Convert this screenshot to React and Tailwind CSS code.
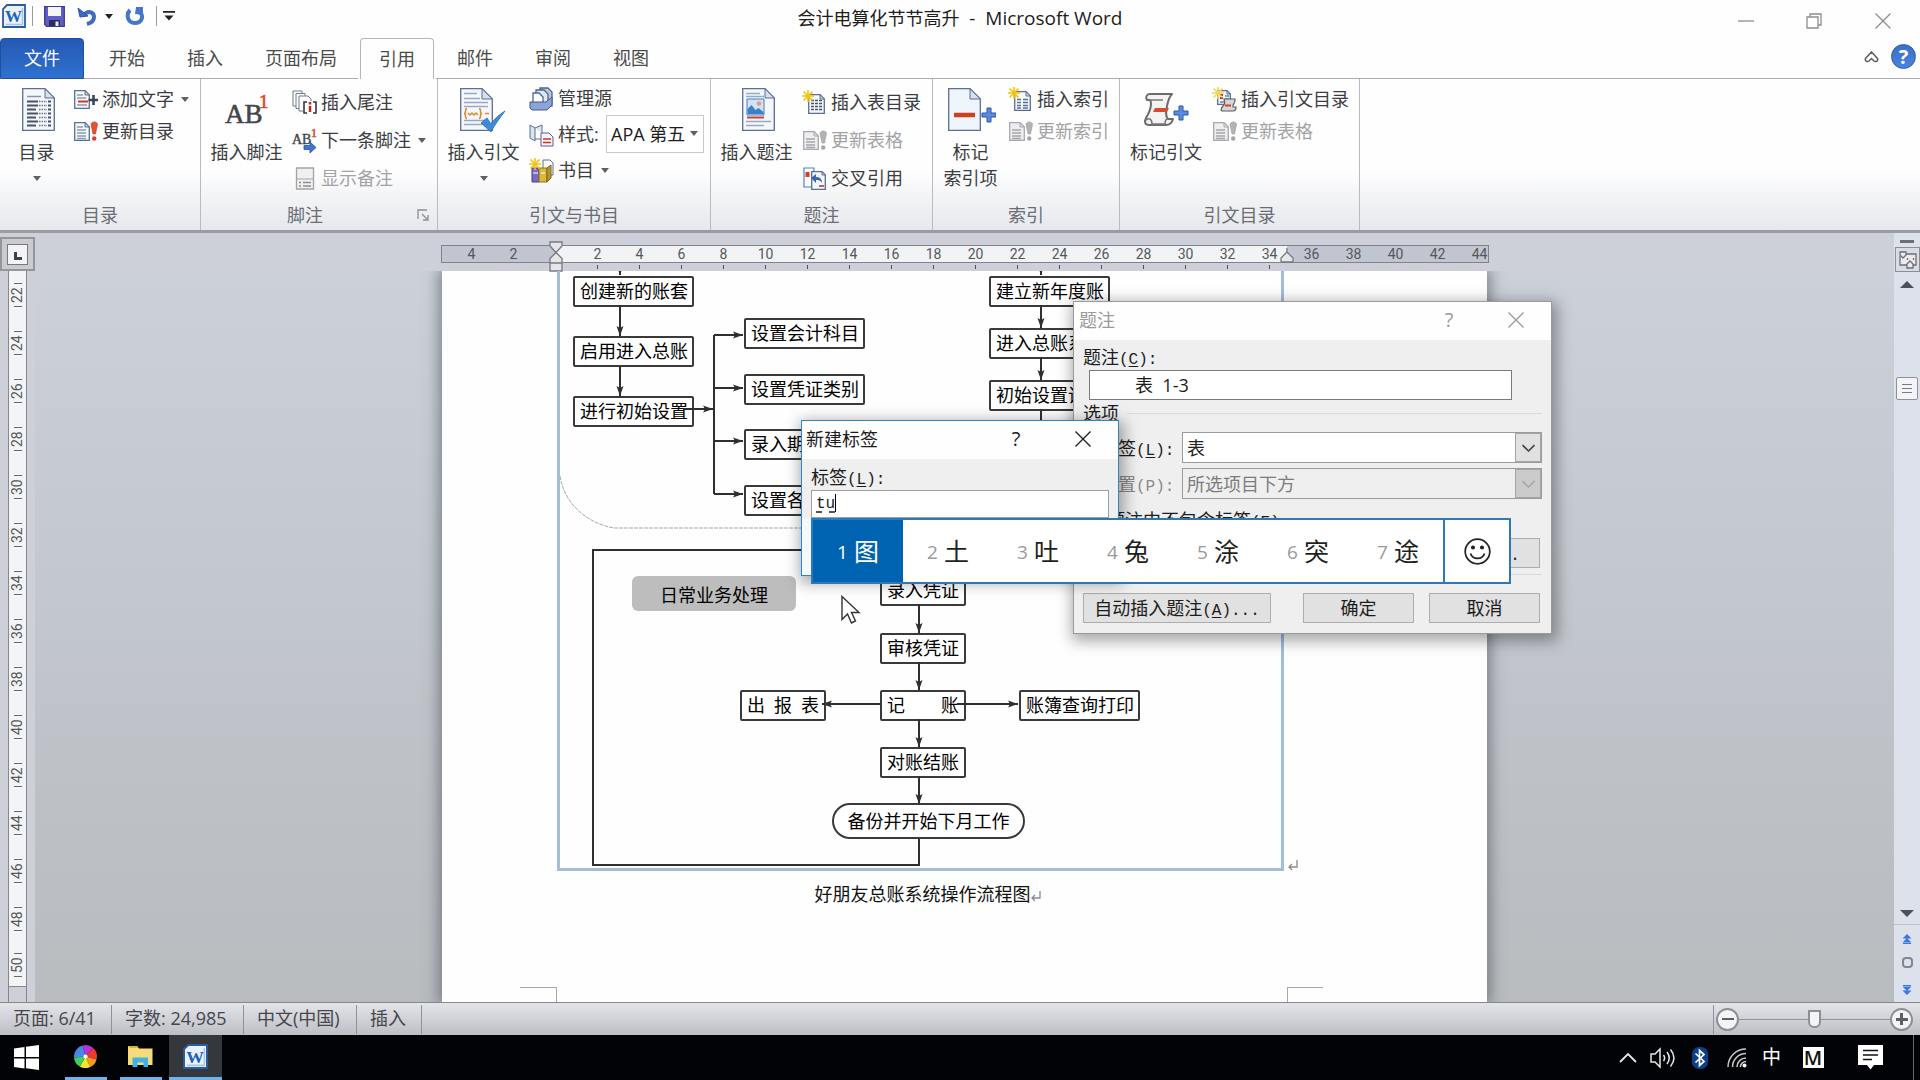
import { useState } from "react"

const ACTIVE_TAB = "引用"
const tabs = ["开始", "插入", "页面布局", "引用", "邮件", "审阅", "视图"]

const rulerMarks = [4, 2, null, 2, 4, 6, 8, 10, 12, 14, 16, 18, 20, 22, 24, 26, 28, 30, 32, 34, 36, 38, 40, 42, 44]
const sideMarks = [22, 24, 26, 28, 30, 32, 34, 36, 38, 40, 42, 44, 46, 48, 50]

const candidates = ["图", "土", "吐", "兔", "涂", "突", "途"]

// flow chart nodes, placed on the drawing canvas
const nodes = [
  { x: 13, y: 5, w: 121, parts: ["创建新的账套"] },
  { x: 13, y: 65, w: 121, parts: ["启用进入总账"] },
  { x: 13, y: 125, w: 121, parts: ["进行初始设置"] },
  { x: 184, y: 47, w: 121, parts: ["设置会计科目"] },
  { x: 184, y: 103, w: 121, parts: ["设置凭证类别"] },
  { x: 184, y: 158, w: 121, parts: ["录入期初余额"] },
  { x: 184, y: 214, w: 121, parts: ["设置各种参数"] },
  { x: 429, y: 5, w: 121, parts: ["建立新年度账"] },
  { x: 429, y: 57, w: 121, parts: ["进入总账系统"] },
  { x: 429, y: 109, w: 121, parts: ["初始设置调整"] },
  { x: 320, y: 304, w: 86, parts: ["录入凭证"] },
  { x: 320, y: 362, w: 86, parts: ["审核凭证"] },
  { x: 180, y: 419, w: 86, parts: ["出", "报", "表"] },
  { x: 320, y: 419, w: 86, parts: ["记", "账"] },
  { x: 459, y: 419, w: 121, parts: ["账簿查询打印"] },
  { x: 320, y: 476, w: 86, parts: ["对账结账"] },
]

const connectors = [
  "M60 0V4", "M60 34V65", "M60 95V125", "M123 138H153",
  "M154 64H183", "M154 117H183", "M154 170H183", "M154 223H183",
  "M481 0V4", "M481 34V57", "M481 86V109", "M481 139V161",
  "M359 333V362", "M359 391V419", "M359 448V476", "M359 505V533",
  "M320 433H262", "M397 433H458",
]

/* ---------- icons ---------- */

function Caret({ className = "text-[#5f6064]" }) {
  return (
    <svg className={className} width="8" height="5" viewBox="0 0 8 5" aria-hidden="true">
      <path d="M0 0h8L4 5z" fill="currentColor" />
    </svg>
  )
}

function Page({ x = 0, y = 0, w = 17, h = 20, fold = 6, fill = "#f4f8fd", stroke = "#5b6f92", children }) {
  return (
    <g transform={`translate(${x} ${y})`}>
      <path d={`M.7 .7H${w - fold}L${w - 0.7} ${fold}V${h - 0.7}H.7z`} fill={fill} stroke={stroke} strokeWidth="1.3" />
      <path d={`M${w - fold} .7V${fold}H${w - 0.7}z`} fill="#d4dfef" stroke={stroke} strokeWidth="1" />
      {children}
    </g>
  )
}

function Star({ color = "#f2c40f" }) {
  return <path d="M6 0v12M0 6h12M1.5 1.5l9 9M10.5 1.5l-9 9" stroke={color} strokeWidth="1.6" />
}

function Small({ children }) {
  return (
    <svg className="shrink-0" width="25" height="25" viewBox="0 0 25 25" fill="none" aria-hidden="true">
      {children}
    </svg>
  )
}

function Big({ children }) {
  return (
    <svg className="shrink-0" width="50" height="45" viewBox="0 0 50 45" fill="none" aria-hidden="true">
      {children}
    </svg>
  )
}

const PlusMark = ({ x, y }) => (
  <path
    transform={`translate(${x} ${y})`}
    d="M5 0h4v5h5v4H9v5H5V9H0V5h5z"
    fill="#5a8be0"
    stroke="#2c55a8"
    strokeWidth="1"
  />
)

const icons = {
  toc: (
    <Big>
      <Page x={10} y={1} w={33} h={43} fold={10}>
        <path d="M5 13.5h11M5 17.5h11M5 21.5h9M5 25.5h11M5 29.5h9M5 33.5h11M5 37.5h9" stroke="#4a5568" strokeWidth="1.8" />
        <path d="M17 13.5h8M17 17.5h8M17 21.5h8M17 25.5h8M17 29.5h8M17 33.5h8M17 37.5h8" stroke="#6b7890" strokeWidth="1.5" strokeDasharray="1.5 1" />
        <path d="M26 13.5h3M26 17.5h3M26 21.5h3M26 25.5h3M26 29.5h3M26 33.5h3M26 37.5h3" stroke="#4a5568" strokeWidth="2" />
        <path d="M5 8.5h14" stroke="#8a94a8" strokeWidth="1.5" />
      </Page>
    </Big>
  ),
  addText: (
    <Small>
      <Page x={1} y={3} w={16} h={19} fold={5}>
        <path d="M3 5h6M3 8h9M3 15h10" stroke="#8b9bb5" strokeWidth="1.3" />
        <path d="M4 11.5h10" stroke="#d03a2a" strokeWidth="2" />
      </Page>
      <path d="M20.5 8v10M15.500 13h9.500" stroke="#3b4557" strokeWidth="2.6" />
    </Small>
  ),
  update: (
    <Small>
      <Page x={1} y={3} w={16} h={19} fold={5}>
        <path d="M3 5h6M3 8h9M3 11h9M3 14h9M3 16.5h9" stroke="#8b9bb5" strokeWidth="1.3" />
      </Page>
      <path d="M18 5.5C18 2 24.5 2 24.5 5.5L22.500 15h-2.500z" fill="#e8512b" stroke="#b8391c" strokeWidth=".6" />
      <circle cx="21.2" cy="19.5" r="2.2" fill="#d9431f" />
    </Small>
  ),
  updateOff: (
    <Small>
      <Page x={1} y={3} w={16} h={19} fold={5} fill="#eeeef0" stroke="#a9a9ad">
        <path d="M3 8h9M3 11h9M3 14h9M3 16.5h9" stroke="#a5a5aa" strokeWidth="1.3" />
      </Page>
      <path d="M18 5.5C18 2 24.5 2 24.5 5.5L22.500 15h-2.500z" fill="#b5b2b5" stroke="#9b989b" strokeWidth=".6" />
      <circle cx="21.2" cy="19.5" r="2.2" fill="#a8a5a8" />
    </Small>
  ),
  footnote: (
    <Big>
      <text x="3" y="36" fontFamily="Liberation Serif, serif" fontSize="27" fill="#44464b" stroke="#44464b" strokeWidth=".6">AB</text>
      <text x="37" y="21" fontFamily="Liberation Serif, serif" fontSize="19" fill="#d9452b" stroke="#d9452b" strokeWidth=".6">1</text>
    </Big>
  ),
  endnote: (
    <Small>
      <path d="M1 1h9v15H1z" fill="#fff" stroke="#6c7a92" />
      <path d="M4 3.5h9v15H4z" fill="#fff" stroke="#6c7a92" />
      <path d="M7 6h9l3 3v12H7z" fill="#fff" stroke="#6c7a92" />
      <path d="M11 11h14v14H11z" fill="#fff" />
      <path d="M15 12h-3v11h3M21 12h3v11h-3" stroke="#33363c" strokeWidth="1.6" />
      <path d="M18 12v2.500M18 16v6" stroke="#c0281e" strokeWidth="2.5" />
    </Small>
  ),
  nextNote: (
    <Small>
      <text x="0" y="16" fontFamily="Liberation Serif, serif" fontSize="14" fill="#44464b" stroke="#44464b" strokeWidth=".4">AB</text>
      <text x="19" y="9" fontFamily="Liberation Serif, serif" fontSize="12" fill="#d9452b" stroke="#d9452b" strokeWidth=".5">1</text>
      <path d="M12 17.5h6v-3.500l6 5.500-6 5.500v-3.500h-6z" fill="#3f74cf" stroke="#2453a5" strokeWidth=".8" />
    </Small>
  ),
  showNotes: (
    <Small>
      <path d="M4.5 2h17v21h-17z" fill="#f1eff0" stroke="#a6a2a6" strokeWidth="1.3" />
      <path d="M4.5 13h17" stroke="#a6a2a6" />
      <path d="M7 16.5h2M11 16.5h8M7 20h2M11 20h8" stroke="#8f8b8f" strokeWidth="1.5" />
    </Small>
  ),
  citation: (
    <Big>
      <Page x={1} y={1} w={33} h={43} fold={11}>
        <path d="M4 5.5h13M4 10.5h16M4 14.5h24M4 18.5h24M4 32.5h24M4 36.5h18" stroke="#98a8c6" strokeWidth="1.6" />
        <path d="M7 20.5c-3 0 0 5-3 5 3 0 0 5 3 5M19 20.5c3 0 0 5 3 5-3 0 0 5-3 5M8 25l2 2 2-2 2 2 2-2 2 2M25 25.500h4" stroke="#d98a35" strokeWidth="1.5" />
      </Page>
      <path d="M22 36l6-5 4 6C36 31 41 27 46 24c-5 7-10 13-14 21z" fill="#3f8ad8" stroke="#2769b5" strokeWidth=".8" />
    </Big>
  ),
  sources: (
    <Small>
      <path d="M11 2h8l4 4v14H11z" fill="#b9c9e2" stroke="#4f6490" strokeWidth="1.3" />
      <path d="M7 4h8l4 4v12H7z" fill="#dde6f3" stroke="#4f6490" strokeWidth="1.3" />
      <path d="M4 7h6l4 4v9H4z" fill="#fff" stroke="#4f6490" strokeWidth="1.3" />
      <path d="M1 16h16l6-5v8l-5 5H3l-2-2z" fill="#8aa5d6" stroke="#3f5a94" />
    </Small>
  ),
  style: (
    <Small>
      <path d="M1 3l5 3v13l-5-3zM6 6l7-3v8" fill="#dbe4f2" stroke="#5b6f92" />
      <path d="M6 17h6" stroke="#5b6f92" />
      <path d="M12 11h8l4 4v9H12z" fill="#f6f3f6" stroke="#5b5f92" />
      <path d="M14 17h8M14 20.5h8" stroke="#c23a2c" strokeWidth="1.5" />
    </Small>
  ),
  biblio: (
    <Small>
      <path d="M14 2h7l3 3v12H14z" fill="#fff" stroke="#5b6f92" />
      <path d="M3 10h7v14H3z" fill="#7a6bc4" stroke="#4a3d8f" />
      <path d="M10 10h8v14h-8z" fill="#d9b93d" stroke="#8f761a" />
      <path d="M18 10l4-3v13l-4 4z" fill="#b8972a" stroke="#7a6412" />
      <path d="M4 15h5M12 15h4" stroke="#fff" />
      <Star />
    </Small>
  ),
  caption: (
    <Big>
      <Page x={10} y={1} w={33} h={43} fold={10}>
        <path d="M4 5.5h14M4 8.5h18M4 33.5h25M4 37.5h18" stroke="#9aa7bd" strokeWidth="1.5" />
        <path d="M5 11h17v16H5z" fill="#cfe4fa" stroke="#4a7bbf" />
        <circle cx="17" cy="15.5" r="2.3" fill="#f29a6b" />
        <path d="M5.5 26v-5l4-4 4 5 3-2 5 4v2z" fill="#3f7fc8" />
        <path d="M5 29.5h17" stroke="#c9452f" strokeWidth="2" />
      </Page>
    </Big>
  ),
  tableToc: (
    <Small>
      <Page x={6} y={4} w={17} h={20} fold={5}>
        <path d="M3 6.5h11M3 9.5h11M3 12.5h11M3 15.5h11" stroke="#4a5568" strokeWidth="1.6" strokeDasharray="3 1" />
      </Page>
      <Star />
    </Small>
  ),
  indexDoc: (
    <Small>
      <Page x={6} y={4} w={17} h={20} fold={5}>
        <path d="M3 8.5h4M9 8.5h5M3 11.5h4M9 11.5h5M3 14.5h4M9 14.5h5M3 17h4M9 17h5" stroke="#5a7098" strokeWidth="1.5" />
      </Page>
      <Star />
    </Small>
  ),
  cross: (
    <Small>
      <path d="M2 2h10v19H2z" fill="#fff" stroke="#5b7fae" strokeWidth="1.2" />
      <path d="M3.5 6h4v5h-4z" fill="#e03a1e" />
      <Page x={9} y={5} w={15} h={19} fold={4}>
        <path d="M8 15h5" stroke="#c0281e" strokeWidth="1.5" />
      </Page>
      <path d="M9 12l5-4v3c4 0 6 2 6 6-2-3-3-3-6-3v3z" fill="#3a66b8" />
    </Small>
  ),
  markEntry: (
    <Big>
      <Page x={2} y={1} w={33} h={43} fold={11} fill="#eef5fd" />
      <path d="M8 28h21" stroke="#d0401d" strokeWidth="4.5" />
      <PlusMark x={36} y={21} />
    </Big>
  ),
  markCite: (
    <Big>
      <path d="M9 7h22c-3 3-4 7-5 12-1 5-2 10 1 13h5c-1 4-3 6-7 6H8c-4 0-5-3-3-7 3-5 5-9 5-14 0-2 0-3-1-4H6c-2-3 0-6 3-6z" fill="#f3f3f4" stroke="#6b6c70" strokeWidth="2" strokeLinejoin="round" />
      <path d="M9 13h13M5 33c4-3 6 0 6 4h13M27 32c-3 0-3 3-3 5" stroke="#77787c" strokeWidth="1.6" />
      <path d="M14 21h14l-2 4H12z" fill="#d94c27" />
      <PlusMark x={33} y={19} />
    </Big>
  ),
  citeToc: (
    <Small>
      <Page x={5} y={3} w={14} h={15} fold={4}>
        <path d="M3 5h3M3 8h3" stroke="#c9302a" strokeWidth="2" />
        <path d="M8 6h4M8 9h4M3 12h8" stroke="#6b83ad" strokeWidth="1.3" />
      </Page>
      <path d="M12 12h11c1 4-3 5-2 8h3c0 3-1 4-3 4H11c-3 0-2-3 0-5s2-3 1-7z" fill="#d7d5d5" stroke="#5c5a5c" strokeWidth="1.2" />
      <path d="M13 18.5h6" stroke="#c9452f" strokeWidth="2" />
      <Star color="#f4d85a" />
    </Small>
  ),
}

function WordLogo({ size = 24 }) {
  return (
    <svg width={size} height={size} viewBox="0 0 24 24" fill="none" aria-hidden="true">
      <path d="M5 1h18v22H1V5z" fill="#e9f2fb" stroke="#2a5ca3" strokeWidth="1.8" />
      <path d="M4 20.5h17M20.5 4v16" stroke="#a9c5e6" strokeWidth="1.5" />
      <text x="11.5" y="18" textAnchor="middle" fontFamily="Liberation Serif, serif" fontWeight="bold" fontSize="17" fill="#1f62b5">W</text>
    </svg>
  )
}

function CloseX({ className }) {
  return (
    <svg className={className} width="16" height="16" viewBox="0 0 16 16" fill="none" stroke="currentColor" strokeWidth="1.3" aria-hidden="true">
      <path d="M.5.5l15 15M15.5.5l-15 15" />
    </svg>
  )
}

/* ---------- title bar and tabs ---------- */

function TitleBar() {
  return (
    <header className="relative flex h-[38px] shrink-0 items-start justify-between bg-[#fefefe]">
      <div className="flex h-8 items-center pl-[2px]">
        <WordLogo />
        <span className="ml-[6px] h-5 w-px bg-[#9a9a9a]" />
        <button aria-label="保存" className="ml-[11px]">
          <svg width="21" height="21" viewBox="0 0 21 21" fill="none">
            <path d="M.7.7h19.6v19.600H2.500L.7 18.500z" fill="#5f5fc4" stroke="#3c3c94" strokeWidth="1.3" />
            <path d="M4 1h13v9H4z" fill="#f4f6fb" />
            <path d="M5 14h11v6H5z" fill="#2c2c5e" />
            <path d="M11.5 15.5h3V20h-3z" fill="#e8e8f4" />
          </svg>
        </button>
        <button aria-label="撤消" className="ml-3">
          <svg width="20" height="20" viewBox="0 0 20 20" fill="none">
            <path d="M7 9c4-5 10-3 10 2 0 4-3 6-7 7" stroke="#3e6cc4" strokeWidth="4" />
            <path d="M1 2l2 9 8-1z" fill="#3e6cc4" stroke="#2b56aa" />
          </svg>
        </button>
        <button aria-label="撤消列表" className="ml-2"><Caret className="text-[#222]" /></button>
        <button aria-label="重复" className="ml-3">
          <svg width="20" height="20" viewBox="0 0 20 20" fill="none">
            <path d="M5 4c-4 4-3 13 5 13 7 0 9-7 5-11" stroke="#4676cc" strokeWidth="4" />
            <path d="M18 1v8l-8-1 1-7z" fill="#4676cc" />
          </svg>
        </button>
        <span className="ml-[11px] h-5 w-px bg-[#9a9a9a]" />
        <button aria-label="自定义快速访问工具栏" className="ml-[6px]">
          <svg width="12" height="10" viewBox="0 0 12 10">
            <path d="M0 0h12v1.8H0zM1.500 4.500h9L6 9.500z" fill="#222" />
          </svg>
        </button>
      </div>
      <h1 className="pointer-events-none absolute inset-x-0 top-[5px] text-center text-[18px] leading-[26px] whitespace-pre text-[#1d1d1d]">
        会计电算化节节高升<span className="text-[19px]">{"  -  Microsoft Word"}</span>
      </h1>
      <div className="flex text-[#8d8d8d]">
        <button aria-label="最小化" className="flex h-[42px] w-[68px] items-center justify-center">
          <svg width="16" height="2"><path d="M0 1h16" stroke="currentColor" strokeWidth="1.3" /></svg>
        </button>
        <button aria-label="向下还原" className="flex h-[42px] w-[68px] items-center justify-center">
          <svg width="16" height="16" viewBox="0 0 16 16" fill="none" stroke="currentColor" strokeWidth="1.3">
            <path d="M1 4h11v11H1zM4 4V1h11v11h-3" />
          </svg>
        </button>
        <button aria-label="关闭" className="flex h-[42px] w-[72px] items-center justify-center pr-[2px]"><CloseX /></button>
      </div>
    </header>
  )
}

function TabBar() {
  return (
    <nav className="flex h-[41px] shrink-0 items-stretch bg-[#fefefe] text-[18px] text-[#4b4b4b]">
      <button className="w-[84px] rounded-t-[4px] border border-[#1f4f9e] bg-linear-to-b from-[#2559b3] to-[#2f71d0] text-white">文件</button>
      <span className="w-1 border-b border-[#a9abb0]" />
      {tabs.map((t) => (
        <button
          key={t}
          className={
            t === ACTIVE_TAB
              ? "mx-[2px] rounded-t-[4px] border border-b-0 border-[#b4b6ba] px-[18px]"
              : "border-b border-[#a9abb0] px-[21px]"
          }
        >
          {t}
        </button>
      ))}
      <div className="flex flex-1 items-center justify-end gap-3 border-b border-[#a9abb0] pr-[4px] pb-[3px]">
        <button aria-label="功能区最小化">
          <svg width="15" height="12" viewBox="0 0 15 12" fill="none" stroke="#5a5a5a" strokeWidth="1.5">
            <path d="M7.5 1l6 6.500c1 2-1.500 4-3.500 2.500L7.500 7.500 5 10C3 11.500.5 9.500 1.500 7.500z" />
          </svg>
        </button>
        <button aria-label="帮助" className="flex size-[25px] items-center justify-center rounded-full border border-[#2a5cb0] bg-linear-to-b from-[#3a6fc6] to-[#4a82dc] text-[20px] leading-none font-bold text-white">
          ?
        </button>
      </div>
    </nav>
  )
}

/* ---------- ribbon ---------- */

function Group({ label, className, launcher, children }) {
  return (
    <section aria-label={label} className={`flex shrink-0 flex-col justify-between border-r border-[#b9bbc0] ${className}`}>
      <div className="flex">{children}</div>
      <div className="flex h-[30px] items-center text-[#6b6d73]">
        <span className="flex-1 text-center">{label}</span>
        {launcher && (
          <button aria-label={`${label}选项`} className="flex w-[28px] justify-center">
            <svg width="12" height="12" viewBox="0 0 12 12" fill="none" stroke="#8d8f94" strokeWidth="1.3">
              <path d="M1 10V1h9M5 5l5 5M11 6v5H6" />
            </svg>
          </button>
        )}
      </div>
    </section>
  )
}

function BigButton({ icon, lines, caret, className }) {
  return (
    <button className={`flex shrink-0 flex-col items-center pt-2 ${className}`}>
      {icons[icon]}
      <span className="h-[7px]" />
      {lines.map((l) => (
        <span key={l} className="leading-[26px] whitespace-nowrap">{l}</span>
      ))}
      {caret && <span className="flex h-[26px] items-center"><Caret /></span>}
    </button>
  )
}

function SmallButton({ icon, label, caret, disabled, className = "h-8" }) {
  return (
    <button disabled={disabled} className={`flex items-center whitespace-nowrap disabled:text-[#a3a3a6] ${className}`}>
      {icons[icon]}
      <span className="ml-1">{label}</span>
      {caret && <span className="ml-[7px]"><Caret /></span>}
    </button>
  )
}

function Ribbon() {
  return (
    <div className="flex h-[154px] shrink-0 border-b-[3px] border-[#999ca3] bg-linear-to-b from-[#fefefe] from-60% to-[#e6e8ed] text-[18px] text-[#3c3d42]">
      <Group label="目录" className="w-[201px]">
        <BigButton icon="toc" lines={["目录"]} caret className="w-[73px]" />
        <div className="flex flex-col items-start pt-1">
          <SmallButton icon="addText" label="添加文字" caret />
          <SmallButton icon="update" label="更新目录" />
        </div>
      </Group>
      <Group label="脚注" className="w-[237px]" launcher>
        <BigButton icon="footnote" lines={["插入脚注"]} className="w-[91px]" />
        <div className="flex flex-col items-start pt-1">
          <SmallButton icon="endnote" label="插入尾注" className="h-[38px]" />
          <SmallButton icon="nextNote" label="下一条脚注" caret className="h-[38px]" />
          <SmallButton icon="showNotes" label="显示备注" disabled className="h-[38px]" />
        </div>
      </Group>
      <Group label="引文与书目" className="w-[273px]">
        <BigButton icon="citation" lines={["插入引文"]} caret className="w-[91px]" />
        <div className="flex flex-col items-start pt-px">
          <SmallButton icon="sources" label="管理源" className="h-[36px]" />
          <div className="flex h-[36px] items-center">
            {icons.style}
            <label htmlFor="cite-style" className="ml-1 w-[48px]">样式:</label>
            <div className="relative">
              <select id="cite-style" className="block h-[38px] w-[98px] appearance-none border border-[#c9cacd] bg-white pl-1 text-[18px] text-[#1e1e1e]">
                <option>APA 第五</option>
              </select>
              <span className="pointer-events-none absolute top-[16px] right-[6px]"><Caret /></span>
            </div>
          </div>
          <SmallButton icon="biblio" label="书目" caret className="h-[36px]" />
        </div>
      </Group>
      <Group label="题注" className="w-[222px]">
        <BigButton icon="caption" lines={["插入题注"]} className="w-[91px]" />
        <div className="flex flex-col items-start pt-1">
          <SmallButton icon="tableToc" label="插入表目录" className="h-[38px]" />
          <SmallButton icon="updateOff" label="更新表格" disabled className="h-[38px]" />
          <SmallButton icon="cross" label="交叉引用" className="h-[38px]" />
        </div>
      </Group>
      <Group label="索引" className="w-[187px]">
        <BigButton icon="markEntry" lines={["标记", "索引项"]} className="w-[75px]" />
        <div className="flex flex-col items-start pt-1">
          <SmallButton icon="indexDoc" label="插入索引" />
          <SmallButton icon="updateOff" label="更新索引" disabled />
        </div>
      </Group>
      <Group label="引文目录" className="w-[240px]">
        <BigButton icon="markCite" lines={["标记引文"]} className="w-[92px]" />
        <div className="flex flex-col items-start pt-1">
          <SmallButton icon="citeToc" label="插入引文目录" />
          <SmallButton icon="updateOff" label="更新表格" disabled />
        </div>
      </Group>
    </div>
  )
}

/* ---------- document area ---------- */

function SideRuler() {
  return (
    <aside className="flex w-[35px] shrink-0 flex-col bg-[#cdd0d8] pt-1">
      <button aria-label="制表符" className="flex h-[34px] w-[35px] shrink-0 items-center justify-center border-2 border-[#94969c] bg-[#c9cbd1]">
        <span className="flex size-[21px] items-center justify-center border border-[#77797f] bg-[#f4f4f6]">
          <span className="mt-1 size-[8px] border-b-3 border-l-3 border-[#3f4146]" />
        </span>
      </button>
      <div className="ml-2 flex w-[19px] flex-1 flex-col overflow-hidden border-x border-[#85878d]">
        <div className="border-b border-[#85878d] bg-[#f3f4f5] text-[14px] text-[#55575c]">
          {sideMarks.map((n) => (
            <div key={n} className="flex h-12 flex-col items-center justify-center last:h-[43px]">
              <span className="h-px w-2 shrink-0 bg-[#66686d]" />
              <span className="flex h-[22px] w-full rotate-180 items-center justify-center font-[Roboto,sans-serif] leading-[17px] [writing-mode:vertical-rl]">{n}</span>
              <span className="h-px w-2 shrink-0 bg-[#66686d]" />
            </div>
          ))}
        </div>
      </div>
    </aside>
  )
}

function TopRuler() {
  return (
    <div className="h-[38px] shrink-0 bg-[#cdd0d8] pt-3">
      <div className="relative mx-auto h-[18px] w-[1048px] border border-[#80838a] bg-[#c1c5cf]">
        <span className="absolute inset-y-0 left-[114px] w-[731px] bg-[#f2f3f5]" />
        <div className="relative flex pl-[9px] font-[Roboto,sans-serif] text-[14px] leading-[16px] text-[#55575c]">
          {rulerMarks.map((n, i) => (
            <span key={i} className="flex w-[42px] shrink-0 flex-col items-center">
              {n}
              {i > 2 && i < 20 && <span className="mt-[3px] h-1 w-px bg-[#4f5156]" />}
            </span>
          ))}
        </div>
        <svg className="absolute -top-[5px] left-[107px]" width="14" height="31" viewBox="0 0 14 31" fill="#e6e7ea" stroke="#77797f" strokeWidth="1.3" aria-hidden="true">
          <path d="M1 1h12v4L7 11.5 1 5zM7 11.5l6 6V22H1v-4.500zM1 22h12v8H1z" />
        </svg>
        <svg className="absolute top-px left-[838px]" width="14" height="16" viewBox="0 0 14 16" fill="#e6e7ea" stroke="#77797f" strokeWidth="1.3" aria-hidden="true">
          <path d="M7 1v4l6 6v4H1v-4l6-6" />
        </svg>
      </div>
    </div>
  )
}

function FlowChart() {
  return (
    <div className="relative ml-[115px] h-[600px] w-[727px] shrink-0 border-x-[3px] border-b-[3px] border-[#a1bddb] text-[18px] leading-[27px] text-black">
      {nodes.map((n) => (
        <div
          key={n.parts.join("")}
          className="absolute flex h-[31px] justify-between rounded-[2px] border-2 border-[#3a3a3a] bg-white px-[5px] whitespace-nowrap"
          style={{ left: n.x, top: n.y, width: n.w }}
        >
          {n.parts.map((p) => <span key={p}>{p}</span>)}
        </div>
      ))}
      <div className="absolute top-[305px] left-[72px] h-[35px] w-[164px] rounded-[6px] bg-[#bdbdbd] text-center leading-[39px]">日常业务处理</div>
      <div className="absolute top-[532px] left-[272px] h-[36px] w-[193px] rounded-full border-2 border-[#3a3a3a] bg-white text-center leading-[32px]">备份并开始下月工作</div>
      <svg className="absolute top-0 left-0" width="721" height="597" viewBox="0 0 721 597" fill="none" stroke="#2f2f2f" strokeWidth="2" aria-hidden="true">
        <defs>
          <marker id="tip" viewBox="0 0 10 8" refX="10" refY="4" markerWidth="10" markerHeight="8" markerUnits="userSpaceOnUse" orient="auto">
            <path d="M0 .5L10 4 0 7.500l2-3.500z" fill="#2f2f2f" stroke="none" />
          </marker>
        </defs>
        {connectors.map((d) => <path key={d} d={d} markerEnd="url(#tip)" />)}
        <path d="M154 64V223M359 568V594H33V279H500" />
        <path d="M0 205C4 232 26 252 54 257H670C700 250 718 232 720 205" stroke="#a9a9a9" strokeWidth="1" strokeDasharray="4 1" />
      </svg>
    </div>
  )
}

function Enter() {
  return (
    <svg className="inline-block" width="10" height="11" viewBox="0 0 10 11" fill="none" stroke="#8b8b8b" strokeWidth="1.3" aria-hidden="true">
      <path d="M9 0v7H1M4 4L1 7l3 3" />
    </svg>
  )
}

function Sheet() {
  return (
    <main className="mx-auto flex w-[1045px] shrink-0 flex-col bg-[#fefefe] shadow-[0_0_14px_3px_rgba(70,74,82,0.6)]">
      <div className="flex items-end gap-1">
        <FlowChart />
        <Enter />
      </div>
      <p className="mt-[11px] ml-[115px] w-[727px] pl-[14px] text-center text-[18px] leading-[24px] text-[#111]">
        好朋友总账系统操作流程图<Enter />
      </p>
      <div className="mt-auto flex justify-between pr-[164px] pl-[78px]">
        <span className="h-[15px] w-[37px] border-t border-r border-[#a8a8a8]" />
        <span className="h-[15px] w-[36px] border-t border-l border-[#a8a8a8]" />
      </div>
    </main>
  )
}

function ScrollBar() {
  return (
    <aside className="flex w-[26px] shrink-0 flex-col items-center bg-[#dde1eb]">
      <span className="mt-[7px] h-[3px] w-[14px] bg-[#6b6e75]" />
      <button aria-label="标尺" className="mt-1 flex size-[25px] items-center justify-center border border-[#8b8e95] bg-[#d9dce4]">
        <svg width="19" height="18" viewBox="0 0 19 18" fill="#eceaee" stroke="#6b6e75" strokeWidth="1.3">
          <path d="M5 3h13v11H2V5" />
          <path d="M2 1h6v3L5 7 2 4zM9 17v-4l3-3 3 3v4z" />
          <path d="M9.500 7v2M15.500 7v2" />
        </svg>
      </button>
      <button aria-label="向上滚动" className="mt-[9px]">
        <svg width="14" height="7"><path d="M0 7h14L7 0z" fill="#4d5058" /></svg>
      </button>
      <button aria-label="滚动块" className="mt-[89px] flex h-[23px] w-[22px] flex-col items-center justify-center gap-[3px] rounded-[2px] border border-[#8e9198] bg-[#f3f4f7]">
        <span className="h-px w-[10px] bg-[#777a81]" />
        <span className="h-px w-[10px] bg-[#777a81]" />
        <span className="h-px w-[10px] bg-[#777a81]" />
      </button>
      <button aria-label="向下滚动" className="mt-auto">
        <svg width="14" height="7"><path d="M0 0h14L7 7z" fill="#4d5058" /></svg>
      </button>
      <div className="mt-[7px] flex w-full flex-col items-center border-t border-[#bfc3cc] pt-[9px] pb-[7px]">
        <button aria-label="前一页">
          <svg width="10" height="10" viewBox="0 0 10 10"><path d="M5 0l4.5 4.500h-9zM5 4l4.500 4.500h-9zM1 9h8v1H1z" fill="#3c74e0" /></svg>
        </button>
        <button aria-label="选择浏览对象" className="mt-[13px] size-[11px] rounded-[4px] border-2 border-[#83868c]" />
        <button aria-label="下一页" className="mt-[17px]">
          <svg width="10" height="10" viewBox="0 0 10 10"><path d="M5 10L.5 5.500h9zM5 6L.5 1.500h9zM1 0h8v1H1z" fill="#3c74e0" /></svg>
        </button>
      </div>
    </aside>
  )
}

/* ---------- dialogs ---------- */

// access key hint such as (L):
function Key({ k, tail = "", plain }) {
  return (
    <span className="font-['Liberation_Mono',monospace] text-[16px] leading-none">
      ({plain ? k : <u className="underline-offset-2">{k}</u>}){tail}
    </span>
  )
}

function DialogTitle({ title, className }) {
  return (
    <div className={`flex h-[38px] items-center bg-[#fefefe] pb-[2px] ${className}`}>
      <h2 className="flex-1 text-[18px]">{title}</h2>
      <button aria-label="帮助" className="w-[64px] text-center text-[20px]">?</button>
      <button aria-label="关闭" className="flex w-[70px] justify-center"><CloseX /></button>
    </div>
  )
}

function Combo({ id, value, disabled }) {
  return (
    <div className="relative w-[360px]">
      <select id={id} disabled={disabled} className="block h-[31px] w-full appearance-none border border-[#9b9b9b] bg-white pl-[4px] text-[18px] leading-[26px] text-[#222] opacity-100 disabled:bg-[#efefef] disabled:text-[#7c7c7c]">
        <option>{value}</option>
      </select>
      <span className={`pointer-events-none absolute top-px right-px flex h-[29px] w-[26px] items-center justify-center border border-[#a5a5a5] ${disabled ? "bg-[#cbcbcb] text-[#a8a8a8]" : "bg-[#e1e1e1] text-[#444]"}`}>
        <svg width="13" height="8" viewBox="0 0 13 8" fill="none" stroke="currentColor" strokeWidth="1.6"><path d="M.5 1l6 6 6-6" /></svg>
      </span>
    </div>
  )
}

const dialogButton = "h-[30px] border border-[#adadad] bg-[#e1e1e1] leading-[26px] whitespace-nowrap"

function CaptionDialog() {
  const [text, setText] = useState("表  1-3")
  return (
    <div role="dialog" aria-label="题注" className="absolute top-[301px] left-[1073px] w-[479px] border border-[#9a9a9a] bg-[#efefef] text-[18px] leading-[26px] text-[#1c1c1c] shadow-[2px_4px_14px_3px_rgba(0,0,0,0.35)]">
      <DialogTitle title="题注" className="pl-[5px] text-[#9a9a9a]" />
      <div className="px-[9px] pt-1 pb-[10px]">
        <label htmlFor="caption-text" className="block h-[26px]">题注<Key k="C" tail=":" /></label>
        <input id="caption-text" value={text} onChange={(e) => setText(e.target.value)} className="ml-[6px] block h-[30px] w-[423px] border border-[#7a7a7a] bg-white pb-[2px] pl-[45px] whitespace-pre" />
        <fieldset className="border-b border-[#d9d9d9] pb-[6px]">
          <div className="flex h-[26px] items-center">
            <span className="w-[44px]">选项</span>
            <span className="h-px flex-1 bg-[#d9d9d9]" />
          </div>
          <div className="mt-[6px] flex h-[31px] items-center justify-between pl-[17px]">
            <label htmlFor="caption-label">标签<Key k="L" tail=":" /></label>
            <Combo id="caption-label" value="表" />
          </div>
          <div className="mt-[5px] flex h-[31px] items-center justify-between pl-[17px]">
            <label htmlFor="caption-pos" className="text-[#8a8a8a]">位置<Key k="P" tail=":" plain /></label>
            <Combo id="caption-pos" value="所选项目下方" disabled />
          </div>
          <label className="mt-2 flex h-[26px] items-center pl-[2px]">
            <input type="checkbox" className="mr-[6px] size-4" />
            <span>题注中不包含标签<Key k="E" /></span>
          </label>
          <div className="mt-[5px] flex justify-between pr-[2px]">
            <button className={`w-[146px] ${dialogButton}`}>新建标签<Key k="N" tail="..." /></button>
            <button className={`w-[130px] ${dialogButton}`}>删除标签<Key k="D" /></button>
            <button className={`w-[146px] pl-3 ${dialogButton}`}>编号<Key k="U" tail="..." /></button>
          </div>
        </fieldset>
        <div className="mt-[18px] flex gap-[15px] pr-[2px]">
          <button className={`mr-auto w-[188px] ${dialogButton}`}>自动插入题注<Key k="A" tail="..." /></button>
          <button className={`w-[111px] ${dialogButton}`}>确定</button>
          <button className={`w-[111px] ${dialogButton}`}>取消</button>
        </div>
      </div>
    </div>
  )
}

function NewLabelDialog() {
  const [name, setName] = useState("tu")
  return (
    <div role="dialog" aria-label="新建标签" className="absolute top-[420px] left-[801px] flex h-[156px] w-[318px] flex-col border border-[#2f86c4] bg-[#efefef] text-[18px] leading-[26px] text-[#1c1c1c] shadow-[2px_4px_14px_3px_rgba(0,0,0,0.35)]">
      <DialogTitle title="新建标签" className="pl-1" />
      <div className="px-[9px] pt-[5px]">
        <label htmlFor="label-name" className="block h-[26px]">标签<Key k="L" tail=":" /></label>
        <div className="relative">
          <input id="label-name" value={name} onChange={(e) => setName(e.target.value)} className="block h-[28px] w-full border border-[#a0a0a0] bg-white pl-1 font-['Liberation_Mono',monospace] text-[16px] underline decoration-dashed underline-offset-4" />
          <span className="absolute top-1 left-[24px] h-[18px] w-px bg-black" />
        </div>
      </div>
      <div className="flex-1 bg-[#f3f9fc]" />
    </div>
  )
}

function ImeBar() {
  return (
    <div role="listbox" aria-label="候选词" className="absolute top-[518px] left-[811px] flex h-[66px] w-[700px] border-2 border-[#2a79b8] bg-white">
      {candidates.map((c, i) => (
        <button
          key={c}
          role="option"
          aria-selected={i === 0}
          className={`flex w-[90px] items-center gap-[6px] pl-[24px] ${i === 0 ? "bg-[#0063b1] text-white" : "text-[#1f1f1f]"}`}
        >
          <span className={`pt-[3px] text-[19px] leading-none ${i === 0 ? "" : "text-[#9a9a9a]"}`}>{i + 1}</span>
          <span className="text-[25px] leading-none">{c}</span>
        </button>
      ))}
      <button aria-label="表情" className="flex flex-1 items-center justify-center border-l-2 border-[#2a79b8]">
        <svg width="27" height="27" viewBox="0 0 27 27" fill="none" stroke="#222" strokeWidth="1.7">
          <circle cx="13.5" cy="13.5" r="12.3" />
          <path d="M6.5 15.5c2 6.500 12 6.500 14 0" />
          <circle cx="9" cy="9.5" r="1.2" fill="#222" />
          <circle cx="18" cy="9.5" r="1.2" fill="#222" />
        </svg>
      </button>
    </div>
  )
}

/* ---------- bottom bars ---------- */

function StatusBar() {
  const [zoom, setZoom] = useState(50)
  const item = "flex h-[29px] items-center border-r border-[#8f9197] pb-[2px] pl-[13px] whitespace-nowrap"
  const round = "relative z-10 flex size-[23px] items-center justify-center rounded-full border-2 border-[#8d8f94] bg-[#f4f4f6]"
  return (
    <footer className="flex h-[33px] shrink-0 items-center border-t border-[#85878d] bg-linear-to-b from-[#e4e5e9] to-[#bdbfc6] text-[18px] text-[#44464b]">
      <span className={`${item} w-[112px]`}>页面: 6/41</span>
      <span className={`${item} w-[132px]`}>字数: 24,985</span>
      <span className={`${item} w-[113px]`}>中文(中国)</span>
      <span className={`${item} w-[65px]`}>插入</span>
      <div className="ml-auto flex h-[29px] items-center border-l border-[#8f9197] pr-[7px] pl-[2px]">
        <button aria-label="缩小" className={round}><span className="h-[2px] w-3 bg-[#5d5f64]" /></button>
        <input
          type="range"
          aria-label="显示比例"
          value={zoom}
          onChange={(e) => setZoom(e.target.value)}
          className="h-5 w-[151px] appearance-none bg-[linear-gradient(#8f9197,#8f9197)] bg-[length:100%_1px] bg-center bg-no-repeat [&::-webkit-slider-thumb]:h-[18px] [&::-webkit-slider-thumb]:w-[13px] [&::-webkit-slider-thumb]:appearance-none [&::-webkit-slider-thumb]:rounded-b-[6px] [&::-webkit-slider-thumb]:border-2 [&::-webkit-slider-thumb]:border-[#8d8f94] [&::-webkit-slider-thumb]:bg-[#f4f4f6]"
        />
        <button aria-label="放大" className={round}>
          <span className="h-[3px] w-3 bg-[#5d5f64]" />
          <span className="absolute h-3 w-[3px] bg-[#5d5f64]" />
        </button>
      </div>
    </footer>
  )
}

function TaskButton({ label, active, children }) {
  return (
    <button aria-label={label} className={`flex h-full w-[53px] flex-col items-center justify-end ${active ? "bg-[#34373c]" : ""}`}>
      <span className="flex flex-1 items-center">{children}</span>
      <span className={`h-[3px] bg-[#6cb4f0] ${active ? "w-full" : "w-[42px]"}`} />
    </button>
  )
}

function TaskBar() {
  const tray = "flex h-full items-center justify-center"
  return (
    <footer className="flex h-[45px] shrink-0 items-center gap-[2px] bg-[#020307] text-white">
      <button aria-label="开始" className="flex h-full w-[57px] items-center justify-center pr-1">
        <svg width="25" height="25" viewBox="0 0 25 25" fill="#fff">
          <path d="M0 3.5l10.500-1.500v10H0zM12 1.800L25 0v12H12zM0 13.500h10.500v10L0 22zM12 13.500h13V25l-13-1.800z" />
        </svg>
      </button>
      <TaskButton label="录屏">
        <svg width="23" height="23" viewBox="-12 -12 24 24">
          <path d="M0 0L-3-11.5A12 12 0 0 1 8-9z" fill="#b833d6" />
          <path d="M0 0L8-9A12 12 0 0 1 11.5 3z" fill="#f0392b" />
          <path d="M0 0L11.5 3A12 12 0 0 1 5 11z" fill="#f59a22" />
          <path d="M0 0L5 11A12 12 0 0 1-6 10.5z" fill="#f4e52c" />
          <path d="M0 0L-6 10.5A12 12 0 0 1-12 1z" fill="#3fcf5e" />
          <path d="M0 0L-12 1A12 12 0 0 1-3-11.5z" fill="#4a86e8" />
          <circle r="2.2" fill="#fff" />
        </svg>
      </TaskButton>
      <TaskButton label="文件资源管理器">
        <svg width="25" height="22" viewBox="0 0 25 22">
          <path d="M0 1h9l2 2.5h13.500V20H0z" fill="#f7db7a" />
          <path d="M0 1h9l1.5 2H2z" fill="#d9b23a" />
          <path d="M4.5 22V12.500h15.500V22h-4.500v-4.500H9.500V22z" fill="#3fb2e8" />
        </svg>
      </TaskButton>
      <TaskButton label="Word" active><WordLogo size={25} /></TaskButton>
      <div className="ml-auto flex h-full items-center">
        <button aria-label="显示隐藏的图标" className={`${tray} w-[35px]`}>
          <svg width="18" height="10" viewBox="0 0 18 10" fill="none" stroke="#e8e8e8" strokeWidth="1.8"><path d="M1 9l8-8 8 8" /></svg>
        </button>
        <button aria-label="音量" className={`${tray} w-[36px]`}>
          <svg width="26" height="22" viewBox="0 0 26 22" fill="none" stroke="#e8e8e8" strokeWidth="1.5">
            <path d="M1 7h4l5-5v18l-5-5H1zM13.5 8c1.500 2 1.500 4 0 6M17 5c3 4 3 8 0 12M20.500 2.500c4.500 5.500 4.500 11.500 0 17" />
          </svg>
        </button>
        <button aria-label="蓝牙" className={`${tray} w-[37px]`}>
          <svg width="18" height="24" viewBox="0 0 18 24" fill="none">
            <rect x="1" y="1" width="16" height="22" rx="7" fill="#0b3f88" />
            <path d="M4.5 7.5l8.500 8-4.500 4V4.500l4.500 4-8.500 8" stroke="#fff" strokeWidth="1.7" />
          </svg>
        </button>
        <button aria-label="网络" className={`${tray} w-[37px]`}>
          <svg width="20" height="20" viewBox="0 0 20 20" fill="none" stroke="#c9c9c9" strokeWidth="1.5">
            <path d="M1 19C1 9 9 1 19 1M5.5 19C5.5 11.500 11.500 5.500 19 5.500M10 19c0-5 4-9 9-9" />
            <path d="M13.5 19c0-3 2.500-5.500 5.500-5.500" />
            <circle cx="17.5" cy="17.5" r="2" fill="#fff" stroke="none" />
          </svg>
        </button>
        <button aria-label="输入法" className={`${tray} w-[33px] text-[19px]`}>中</button>
        <button aria-label="M 输入" className={`${tray} w-[50px]`}>
          <span className="flex size-[21px] items-center justify-center bg-white text-[20px] leading-none font-semibold text-[#111]">M</span>
        </button>
        <button aria-label="操作中心" className={`${tray} w-[64px]`}>
          <svg width="25" height="25" viewBox="0 0 25 25">
            <path d="M0 0h25v20h-9l-3.5 4.500L9 20H0z" fill="#fff" />
            <path d="M5 5.5h15M5 10h15M5 14.500h9" stroke="#111" strokeWidth="1.6" />
          </svg>
        </button>
        <span className="mr-[6px] ml-[11px] h-full w-px bg-[#6a6a6a]" />
      </div>
    </footer>
  )
}

export default function App() {
  return (
    <div className="relative flex h-screen flex-col overflow-hidden font-['Open_Sans','Noto_Sans_CJK_SC',sans-serif]">
      <TitleBar />
      <TabBar />
      <Ribbon />
      <div className="flex min-h-0 flex-1">
        <SideRuler />
        <div className="flex min-w-0 flex-1 flex-col bg-linear-to-b from-[#cdd1da] via-[#c2c6cd] to-[#b8bcbf]">
          <TopRuler />
          <div className="flex min-h-0 flex-1 overflow-hidden">
            <Sheet />
          </div>
        </div>
        <ScrollBar />
      </div>
      <StatusBar />
      <TaskBar />
      <CaptionDialog />
      <NewLabelDialog />
      <ImeBar />
      <svg className="absolute top-[595px] left-[841px]" width="20" height="30" viewBox="0 0 20 30" aria-hidden="true">
        <path d="M1 1.5v23l5.500-5.500 4 9 4-2-4-8.500H18z" fill="#fff" stroke="#333" strokeWidth="1.4" />
      </svg>
    </div>
  )
}
